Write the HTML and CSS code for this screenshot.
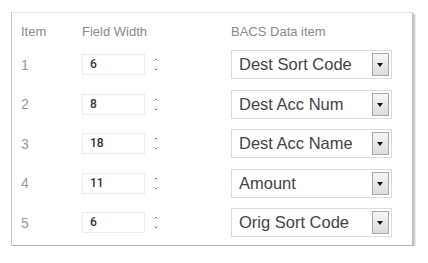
FILE: index.html
```html
<!DOCTYPE html>
<html lang="en">
<head>
    <meta charset="UTF-8">
    <title>BACS Field Layout</title>
    <link rel="stylesheet" href="styles.css">
</head>
<body>
    <div class="card">
        <div class="grid">
            <div class="head">Item</div>
            <div class="head">Field Width</div>
            <div class="head">BACS Data item</div>

            <div class="num">1</div>
            <div class="width"><span class="box">6</span><span class="spin"><svg width="4" height="13" viewBox="0 0 4 13"><path d="M0.5 2.5 L2 1 L3.5 2.5" fill="none" stroke="#888" stroke-width="1"/><path d="M0.5 10.5 L2 12 L3.5 10.5" fill="none" stroke="#888" stroke-width="1"/></svg></span></div>
            <div class="pick"><span>Dest Sort Code</span><span class="drop"></span></div>

            <div class="num">2</div>
            <div class="width"><span class="box">8</span><span class="spin"><svg width="4" height="13" viewBox="0 0 4 13"><path d="M0.5 2.5 L2 1 L3.5 2.5" fill="none" stroke="#888" stroke-width="1"/><path d="M0.5 10.5 L2 12 L3.5 10.5" fill="none" stroke="#888" stroke-width="1"/></svg></span></div>
            <div class="pick"><span>Dest Acc Num</span><span class="drop"></span></div>

            <div class="num">3</div>
            <div class="width"><span class="box">18</span><span class="spin"><svg width="4" height="13" viewBox="0 0 4 13"><path d="M0.5 2.5 L2 1 L3.5 2.5" fill="none" stroke="#888" stroke-width="1"/><path d="M0.5 10.5 L2 12 L3.5 10.5" fill="none" stroke="#888" stroke-width="1"/></svg></span></div>
            <div class="pick"><span>Dest Acc Name</span><span class="drop"></span></div>

            <div class="num">4</div>
            <div class="width"><span class="box">11</span><span class="spin"><svg width="4" height="13" viewBox="0 0 4 13"><path d="M0.5 2.5 L2 1 L3.5 2.5" fill="none" stroke="#888" stroke-width="1"/><path d="M0.5 10.5 L2 12 L3.5 10.5" fill="none" stroke="#888" stroke-width="1"/></svg></span></div>
            <div class="pick"><span>Amount</span><span class="drop"></span></div>

            <div class="num">5</div>
            <div class="width"><span class="box">6</span><span class="spin"><svg width="4" height="13" viewBox="0 0 4 13"><path d="M0.5 2.5 L2 1 L3.5 2.5" fill="none" stroke="#888" stroke-width="1"/><path d="M0.5 10.5 L2 12 L3.5 10.5" fill="none" stroke="#888" stroke-width="1"/></svg></span></div>
            <div class="pick"><span>Orig Sort Code</span><span class="drop"></span></div>
        </div>
    </div>
</body>
</html>
```

FILE: styles.css
```css
* {
    margin: 0;
    padding: 0;
    box-sizing: border-box;
}

body {
    background: #ffffff;
    font-family: "Liberation Sans", Arial, sans-serif;
}

.card {
    margin: 12px 0 0 11px;
    width: 402px;
    height: 234px;
    background: #ffffff;
    border: 1px solid #e6e6e6;
    border-left-color: #c4c4c4;
    border-right-color: #bdbdbd;
    border-bottom-color: #b0b0b0;
    box-shadow: 2px 2px 2px rgba(0, 0, 0, 0.25);
    padding: 0 0 0 9px;
}

.grid {
    display: grid;
    grid-template-columns: 61px 149px 161px;
    grid-template-rows: 32px repeat(5, 39.5px);
    align-items: center;
}

.head {
    align-self: start;
    padding-top: 12px;
    font-size: 13px;
    line-height: 14px;
    color: #8a8a8a;
}

.num {
    font-size: 14px;
    color: #9a9a9a;
}

.width {
    display: flex;
    align-items: center;
    gap: 9px;
}

.box {
    width: 63px;
    height: 21px;
    border: 1px solid #ececec;
    padding-left: 7px;
    font-family: Roboto, sans-serif;
    font-size: 12px;
    font-weight: 500;
    line-height: 19px;
    color: #333333;
}

.spin {
    display: flex;
}

.pick {
    height: 29px;
    border: 1px solid #dcdcdc;
    display: flex;
    align-items: center;
    justify-content: space-between;
    padding: 0 2px 0 7px;
    font-size: 16.5px;
    color: #444444;
}

.drop {
    position: relative;
    width: 17px;
    height: 23px;
    border: 1px solid #a8a8a8;
    background: linear-gradient(#f6f6f6, #dcdcdc);
}

.drop::after {
    content: "";
    position: absolute;
    left: 4px;
    top: 9px;
    border-left: 3.5px solid transparent;
    border-right: 3.5px solid transparent;
    border-top: 4px solid #111111;
}
```
